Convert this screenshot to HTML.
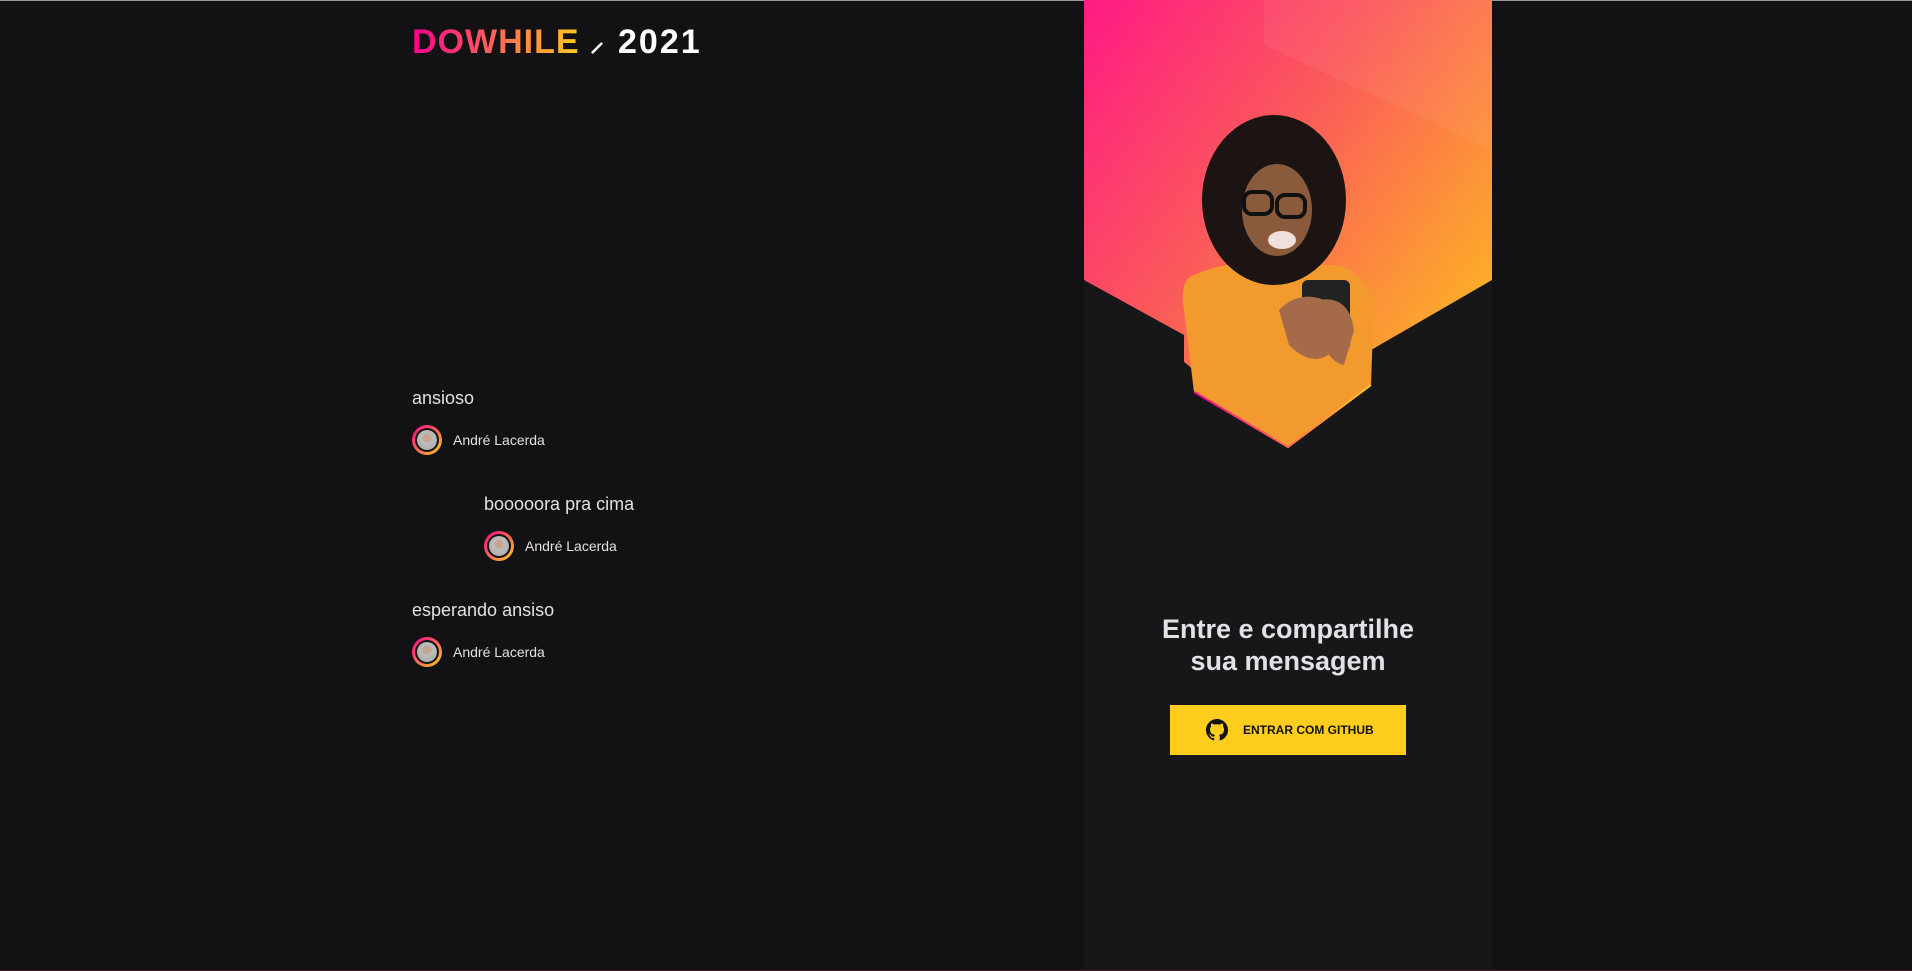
<!DOCTYPE html>
<html><head><meta charset="utf-8"><style>
*{margin:0;padding:0;box-sizing:border-box}
body{width:1912px;height:971px;background:#121214;position:relative;overflow:hidden;font-family:"Liberation Sans",Arial,sans-serif;color:#e1e1e6}
.top{position:absolute;left:0;top:0;width:1912px;height:1px;background:#9a9a9a}
.bot{position:absolute;left:0;bottom:0;width:1912px;height:1px;background:#4a1a2a}
.logo{position:absolute;left:412px;top:27px;font-weight:900;font-size:34px;line-height:30px;white-space:nowrap}
.logo .dw{background:linear-gradient(90deg,#ff008e,#ffcd1e);-webkit-background-clip:text;color:transparent;letter-spacing:1px;display:inline-block}
.logo .yr{color:#fff;letter-spacing:2px;position:absolute;left:206px;top:0}
.logo .bird{color:#fff;position:absolute;left:178px;top:0;font-size:28px}
.msg{position:absolute;font-size:18px;color:#e1e1e6}
.user{position:absolute;display:flex;align-items:center;font-size:14px}
.av{width:30px;height:30px;border-radius:50%;background:linear-gradient(135deg,#ff008e,#ffcd1e);padding:3px;margin-right:11px}
.av i{display:block;width:24px;height:24px;border-radius:50%;background:#121214;padding:2px}
.av i b{display:block;width:20px;height:20px;border-radius:50%;background:radial-gradient(circle at 50% 40%,#c9a58f 0 4px,#bdbdbd 5px,#a7a7a7)}
.panel{position:absolute;left:1084px;top:0;width:408px;height:971px;background:#17171a}
h2{position:absolute;left:1084px;width:408px;top:613px;text-align:center;font-size:27px;line-height:32px;font-weight:700;color:#e1e1e6}
.btn{position:absolute;left:1170px;top:705px;width:236px;height:50px;background:#ffcd1e;display:flex;align-items:center;color:#121214;font-size:12px;font-weight:700}
</style></head><body>
<div class="top"></div>
<div class="logo"><span class="dw">DOWHILE</span><span class="bird">⸝</span><span class="yr">2021</span></div>

<div class="msg" style="left:412px;top:388px">ansioso</div>
<div class="user" style="left:412px;top:425px"><div class="av"><i><b></b></i></div>André Lacerda</div>
<div class="msg" style="left:484px;top:494px">booooora pra cima</div>
<div class="user" style="left:484px;top:531px"><div class="av"><i><b></b></i></div>André Lacerda</div>
<div class="msg" style="left:412px;top:600px">esperando ansiso</div>
<div class="user" style="left:412px;top:637px"><div class="av"><i><b></b></i></div>André Lacerda</div>

<div class="panel"></div>
<svg style="position:absolute;left:1084px;top:0" width="408" height="460" viewBox="0 0 408 460">
<defs>
<linearGradient id="g" x1="0" y1="0" x2="1" y2="0.8"><stop offset="0" stop-color="#ff1a84"/><stop offset="0.45" stop-color="#fb5a5a"/><stop offset="1" stop-color="#fdbc20"/></linearGradient>
<linearGradient id="e" x1="0" y1="0" x2="1" y2="0"><stop offset="0" stop-color="#ff008e"/><stop offset="1" stop-color="#ffcd1e"/></linearGradient>
</defs>
<polygon points="0,0 408,0 408,280 204,447 0,280" fill="url(#g)"/>
<polygon points="180,0 408,0 408,150 180,45" fill="#fff" opacity="0.05"/>
<polygon points="0,280 100,335 100,390 0,390" fill="#17171a"/>
<polygon points="408,280 287,350 287,390 408,390" fill="#17171a"/>
<path d="M100,310 Q95,280 110,275 Q140,262 160,265 L250,265 Q280,270 290,300 L287,385 L204,447 L110,392 Z" fill="#f29a2e"/>
<ellipse cx="190" cy="200" rx="72" ry="85" fill="#1b1412"/>
<ellipse cx="193" cy="210" rx="35" ry="46" fill="#8a5a3c"/>
<ellipse cx="198" cy="240" rx="14" ry="9" fill="#f0e0dc"/>
<rect x="160" y="192" width="28" height="22" rx="8" fill="none" stroke="#111" stroke-width="4"/>
<rect x="193" y="195" width="28" height="22" rx="8" fill="none" stroke="#111" stroke-width="4"/>
<rect x="218" y="280" width="48" height="70" rx="6" fill="#222"/>
<path d="M195,310 Q215,290 240,300 L250,350 Q230,370 205,345 Z" fill="#a56a4a"/>
<path d="M235,300 Q265,295 270,330 L260,365 Q240,360 238,330 Z" fill="#a56a4a"/>
<path d="M110,392 L204,447 L287,385" fill="none" stroke="url(#e)" stroke-width="2"/>
</svg>

<h2>Entre e compartilhe<br>sua mensagem</h2>
<div class="btn">
<svg style="margin-left:36px;margin-right:15px" width="22" height="22" viewBox="0 0 16 16"><path fill="#121214" d="M8 0C3.58 0 0 3.58 0 8c0 3.54 2.29 6.53 5.47 7.59.4.07.55-.17.55-.38 0-.19-.01-.82-.01-1.49-2.01.37-2.53-.49-2.69-.94-.09-.23-.48-.94-.82-1.13-.28-.15-.68-.52-.01-.53.63-.01 1.08.58 1.23.82.72 1.21 1.87.87 2.33.66.07-.52.28-.87.51-1.07-1.78-.2-3.64-.89-3.64-3.95 0-.87.31-1.59.82-2.15-.08-.2-.36-1.02.08-2.12 0 0 .67-.21 2.2.82.64-.18 1.32-.27 2-.27.68 0 1.36.09 2 .27 1.53-1.04 2.2-.82 2.2-.82.44 1.1.16 1.92.08 2.12.51.56.82 1.27.82 2.15 0 3.07-1.87 3.75-3.65 3.95.29.25.54.73.54 1.48 0 1.07-.01 1.93-.01 2.2 0 .21.15.46.55.38A8.013 8.013 0 0016 8c0-4.42-3.58-8-8-8z"/></svg>
ENTRAR COM GITHUB</div>
<div class="bot"></div>
</body></html>
